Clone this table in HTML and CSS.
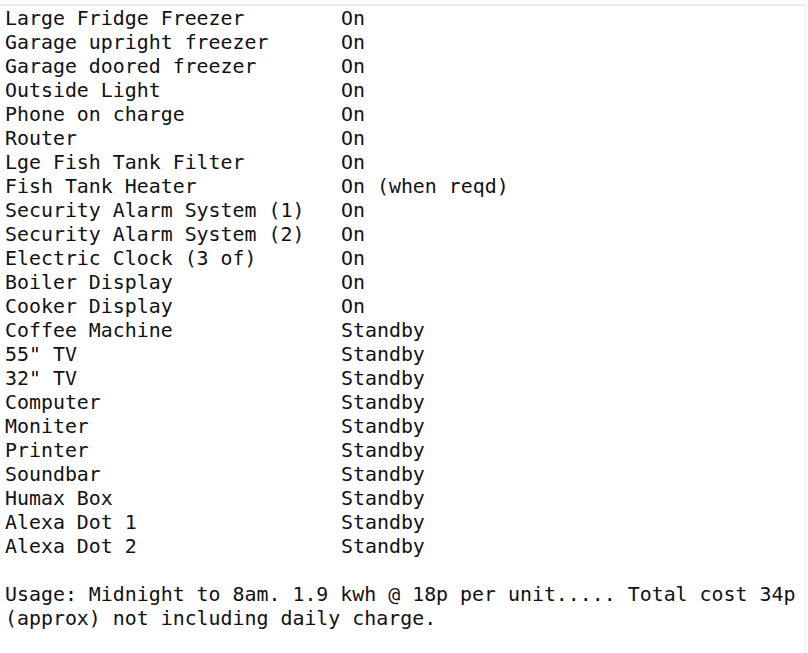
FILE: index.html
```html
<!DOCTYPE html>
<html>
<head>
<meta charset="utf-8">
<link rel="stylesheet" href="styles.css">
</head>
<body>
<div class="page">
  <div class="list">
    <div class="row"><span>Large Fridge Freezer</span><span>On</span></div>
    <div class="row"><span>Garage upright freezer</span><span>On</span></div>
    <div class="row"><span>Garage doored freezer</span><span>On</span></div>
    <div class="row"><span>Outside Light</span><span>On</span></div>
    <div class="row"><span>Phone on charge</span><span>On</span></div>
    <div class="row"><span>Router</span><span>On</span></div>
    <div class="row"><span>Lge Fish Tank Filter</span><span>On</span></div>
    <div class="row"><span>Fish Tank Heater</span><span>On (when reqd)</span></div>
    <div class="row"><span>Security Alarm System (1)</span><span>On</span></div>
    <div class="row"><span>Security Alarm System (2)</span><span>On</span></div>
    <div class="row"><span>Electric Clock (3 of)</span><span>On</span></div>
    <div class="row"><span>Boiler Display</span><span>On</span></div>
    <div class="row"><span>Cooker Display</span><span>On</span></div>
    <div class="row"><span>Coffee Machine</span><span>Standby</span></div>
    <div class="row"><span>55" TV</span><span>Standby</span></div>
    <div class="row"><span>32" TV</span><span>Standby</span></div>
    <div class="row"><span>Computer</span><span>Standby</span></div>
    <div class="row"><span>Moniter</span><span>Standby</span></div>
    <div class="row"><span>Printer</span><span>Standby</span></div>
    <div class="row"><span>Soundbar</span><span>Standby</span></div>
    <div class="row"><span>Humax Box</span><span>Standby</span></div>
    <div class="row"><span>Alexa Dot 1</span><span>Standby</span></div>
    <div class="row"><span>Alexa Dot 2</span><span>Standby</span></div>
  </div>
  <p class="usage">Usage: Midnight to 8am. 1.9 kwh @ 18p per unit..... Total cost 34p<br>(approx) not including daily charge.</p>
</div>
</body>
</html>
```
FILE: styles.css
```css
html, body {
  margin: 0;
  padding: 0;
  background: #ffffff;
}
.page {
  margin-top: 4px;
  width: 806px;
  height: 649px;
  box-sizing: border-box;
  border-top: 2px solid #ececec;
  border-right: 1px solid #ececec;
  padding: 1px 0 0 5px;
  font-family: "DejaVu Sans Mono", "Liberation Mono", monospace;
  font-size: 19.9px;
  line-height: 24px;
  color: #111111;
}
.list {
  display: flex;
  flex-direction: column;
}
.row {
  display: grid;
  grid-template-columns: 336px auto;
  white-space: pre;
}
.usage {
  margin: 24px 0 0 0;
  white-space: nowrap;
}
```
